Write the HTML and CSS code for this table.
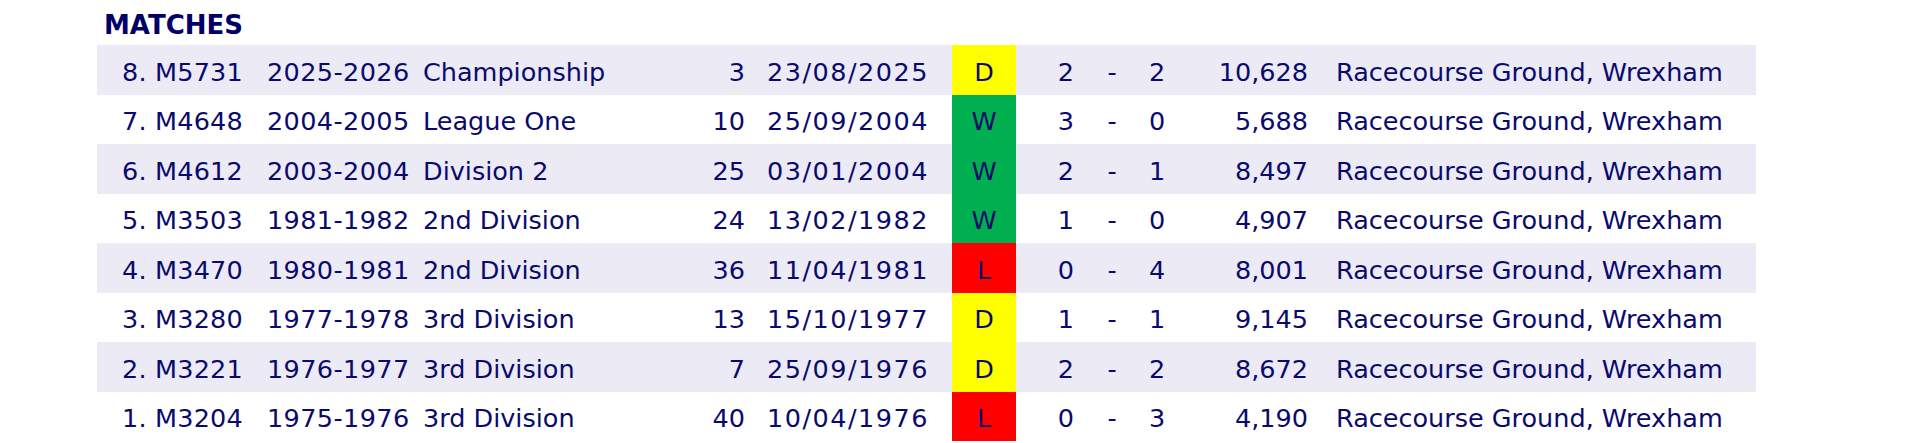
FILE: index.html
```html
<!DOCTYPE html>
<html lang="en">
<head>
<meta charset="utf-8">
<title>Matches</title>
<link rel="stylesheet" href="styles.css">
</head>
<body>
<div class="page">
  <h2 class="title">MATCHES</h2>
  <div class="table">
    <div class="row alt">
      <div class="c id">8. M5731</div><div class="c season">2025-2026</div><div class="c comp">Championship</div><div class="c rnd">3</div><div class="c date">23/08/2025</div><div class="c res d">D</div><div class="c hs">2</div><div class="c dash">-</div><div class="c as">2</div><div class="c att">10,628</div><div class="c venue">Racecourse Ground, Wrexham</div>
    </div>
    <div class="row">
      <div class="c id">7. M4648</div><div class="c season">2004-2005</div><div class="c comp">League One</div><div class="c rnd">10</div><div class="c date">25/09/2004</div><div class="c res w">W</div><div class="c hs">3</div><div class="c dash">-</div><div class="c as">0</div><div class="c att">5,688</div><div class="c venue">Racecourse Ground, Wrexham</div>
    </div>
    <div class="row alt">
      <div class="c id">6. M4612</div><div class="c season">2003-2004</div><div class="c comp">Division 2</div><div class="c rnd">25</div><div class="c date">03/01/2004</div><div class="c res w">W</div><div class="c hs">2</div><div class="c dash">-</div><div class="c as">1</div><div class="c att">8,497</div><div class="c venue">Racecourse Ground, Wrexham</div>
    </div>
    <div class="row">
      <div class="c id">5. M3503</div><div class="c season">1981-1982</div><div class="c comp">2nd Division</div><div class="c rnd">24</div><div class="c date">13/02/1982</div><div class="c res w">W</div><div class="c hs">1</div><div class="c dash">-</div><div class="c as">0</div><div class="c att">4,907</div><div class="c venue">Racecourse Ground, Wrexham</div>
    </div>
    <div class="row alt">
      <div class="c id">4. M3470</div><div class="c season">1980-1981</div><div class="c comp">2nd Division</div><div class="c rnd">36</div><div class="c date">11/04/1981</div><div class="c res l">L</div><div class="c hs">0</div><div class="c dash">-</div><div class="c as">4</div><div class="c att">8,001</div><div class="c venue">Racecourse Ground, Wrexham</div>
    </div>
    <div class="row">
      <div class="c id">3. M3280</div><div class="c season">1977-1978</div><div class="c comp">3rd Division</div><div class="c rnd">13</div><div class="c date">15/10/1977</div><div class="c res d">D</div><div class="c hs">1</div><div class="c dash">-</div><div class="c as">1</div><div class="c att">9,145</div><div class="c venue">Racecourse Ground, Wrexham</div>
    </div>
    <div class="row alt">
      <div class="c id">2. M3221</div><div class="c season">1976-1977</div><div class="c comp">3rd Division</div><div class="c rnd">7</div><div class="c date">25/09/1976</div><div class="c res d">D</div><div class="c hs">2</div><div class="c dash">-</div><div class="c as">2</div><div class="c att">8,672</div><div class="c venue">Racecourse Ground, Wrexham</div>
    </div>
    <div class="row">
      <div class="c id">1. M3204</div><div class="c season">1975-1976</div><div class="c comp">3rd Division</div><div class="c rnd">40</div><div class="c date">10/04/1976</div><div class="c res l">L</div><div class="c hs">0</div><div class="c dash">-</div><div class="c as">3</div><div class="c att">4,190</div><div class="c venue">Racecourse Ground, Wrexham</div>
    </div>
  </div>
</div>
</body>
</html>
```

FILE: styles.css
```css
html, body {
  margin: 0;
  padding: 0;
  background: #ffffff;
}

body {
  font-family: "DejaVu Sans", Verdana, sans-serif;
  color: #0a0a6e;
}

.page {
  padding-left: 97px;
  width: 1659px;
}

.title {
  margin: 0 0 5px 0;
  padding: 10px 0 0 7px;
  font-size: 26px;
  line-height: 30px;
  font-weight: bold;
  color: #000066;
}

.table {
  display: flex;
  flex-direction: column;
}

.row {
  display: grid;
  grid-template-columns: 169px 157px 277px 45px 207px 64px 59px 74px 30px 129px 448px;
  height: 49.5px;
  font-size: 25.5px;
  white-space: nowrap;
}

.row.alt {
  background: #eceaf4;
}

.c {
  display: flex;
  align-items: center;
  padding-top: 4px;
  box-sizing: border-box;
}

.id { padding-left: 25px; letter-spacing: 0.2px; }
.season { padding-left: 1px; letter-spacing: 0.4px; }
.comp { padding-left: 0; }
.rnd { justify-content: flex-end; }
.date { padding-left: 22px; letter-spacing: 1.5px; }
.res { justify-content: center; }
.res.d { background: #ffff00; }
.res.w { background: #00b050; }
.res.l { background: #ff0000; }
.hs { justify-content: flex-end; padding-right: 1px; }
.dash { justify-content: center; }
.as { padding-left: 0; }
.att { justify-content: flex-end; }
.venue { padding-left: 28px; }
```
